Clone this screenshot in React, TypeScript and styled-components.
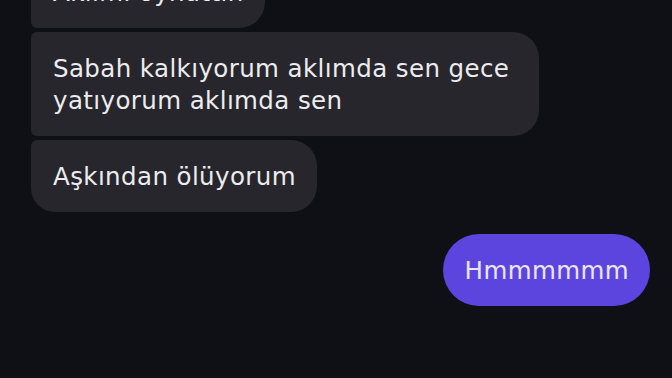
import React from "react";
import styled, { createGlobalStyle } from "styled-components";

type Side = "in" | "out";

type Message = {
  id: string;
  side: Side;
  text: string;
  radius: string;
};

const messages: Message[] = [
  { id: "m1", side: "in", text: "Aklımı oynattın", radius: "24px 26px 26px 6px" },
  {
    id: "m2",
    side: "in",
    text: "Sabah kalkıyorum aklımda sen gece yatıyorum aklımda sen",
    radius: "6px 26px 26px 6px",
  },
  { id: "m3", side: "in", text: "Aşkından ölüyorum", radius: "6px 26px 26px 24px" },
  { id: "m4", side: "out", text: "Hmmmmmm", radius: "36px" },
];

export default function App() {
  return (
    <>
      <GlobalStyle />
      <Thread>
        {messages.map((m) => (
          <Row key={m.id} side={m.side}>
            <Bubble side={m.side} style={{ borderRadius: m.radius }}>
              {m.text}
            </Bubble>
          </Row>
        ))}
      </Thread>
    </>
  );
}

const GlobalStyle = createGlobalStyle`
  html, body {
    margin: 0;
    padding: 0;
    background: #0f1016;
    overflow: hidden;
  }
  body {
    font-family: "DejaVu Sans", "Liberation Sans", sans-serif;
  }
`;

const Thread = styled.div`
  width: 672px;
  height: 378px;
  box-sizing: border-box;
  display: flex;
  flex-direction: column;
  gap: 4px;
  padding: 0 22px 0 31px;
  margin-top: -44px;
  background: #0f1016;
`;

const Row = styled.div<{ side: Side }>`
  display: flex;
  justify-content: ${(p) => (p.side === "out" ? "flex-end" : "flex-start")};
  margin-top: ${(p) => (p.side === "out" ? "18px" : "0")};
`;

const Bubble = styled.div<{ side: Side }>`
  box-sizing: border-box;
  max-width: 508px;
  padding: 21px 21px 19px 22px;
  font-size: 24.5px;
  line-height: 32px;
  letter-spacing: 0.4px;
  background: ${(p) => (p.side === "out" ? "#5c45de" : "#26262c")};
  color: ${(p) => (p.side === "out" ? "#ebe6ff" : "#ececee")};
`;
